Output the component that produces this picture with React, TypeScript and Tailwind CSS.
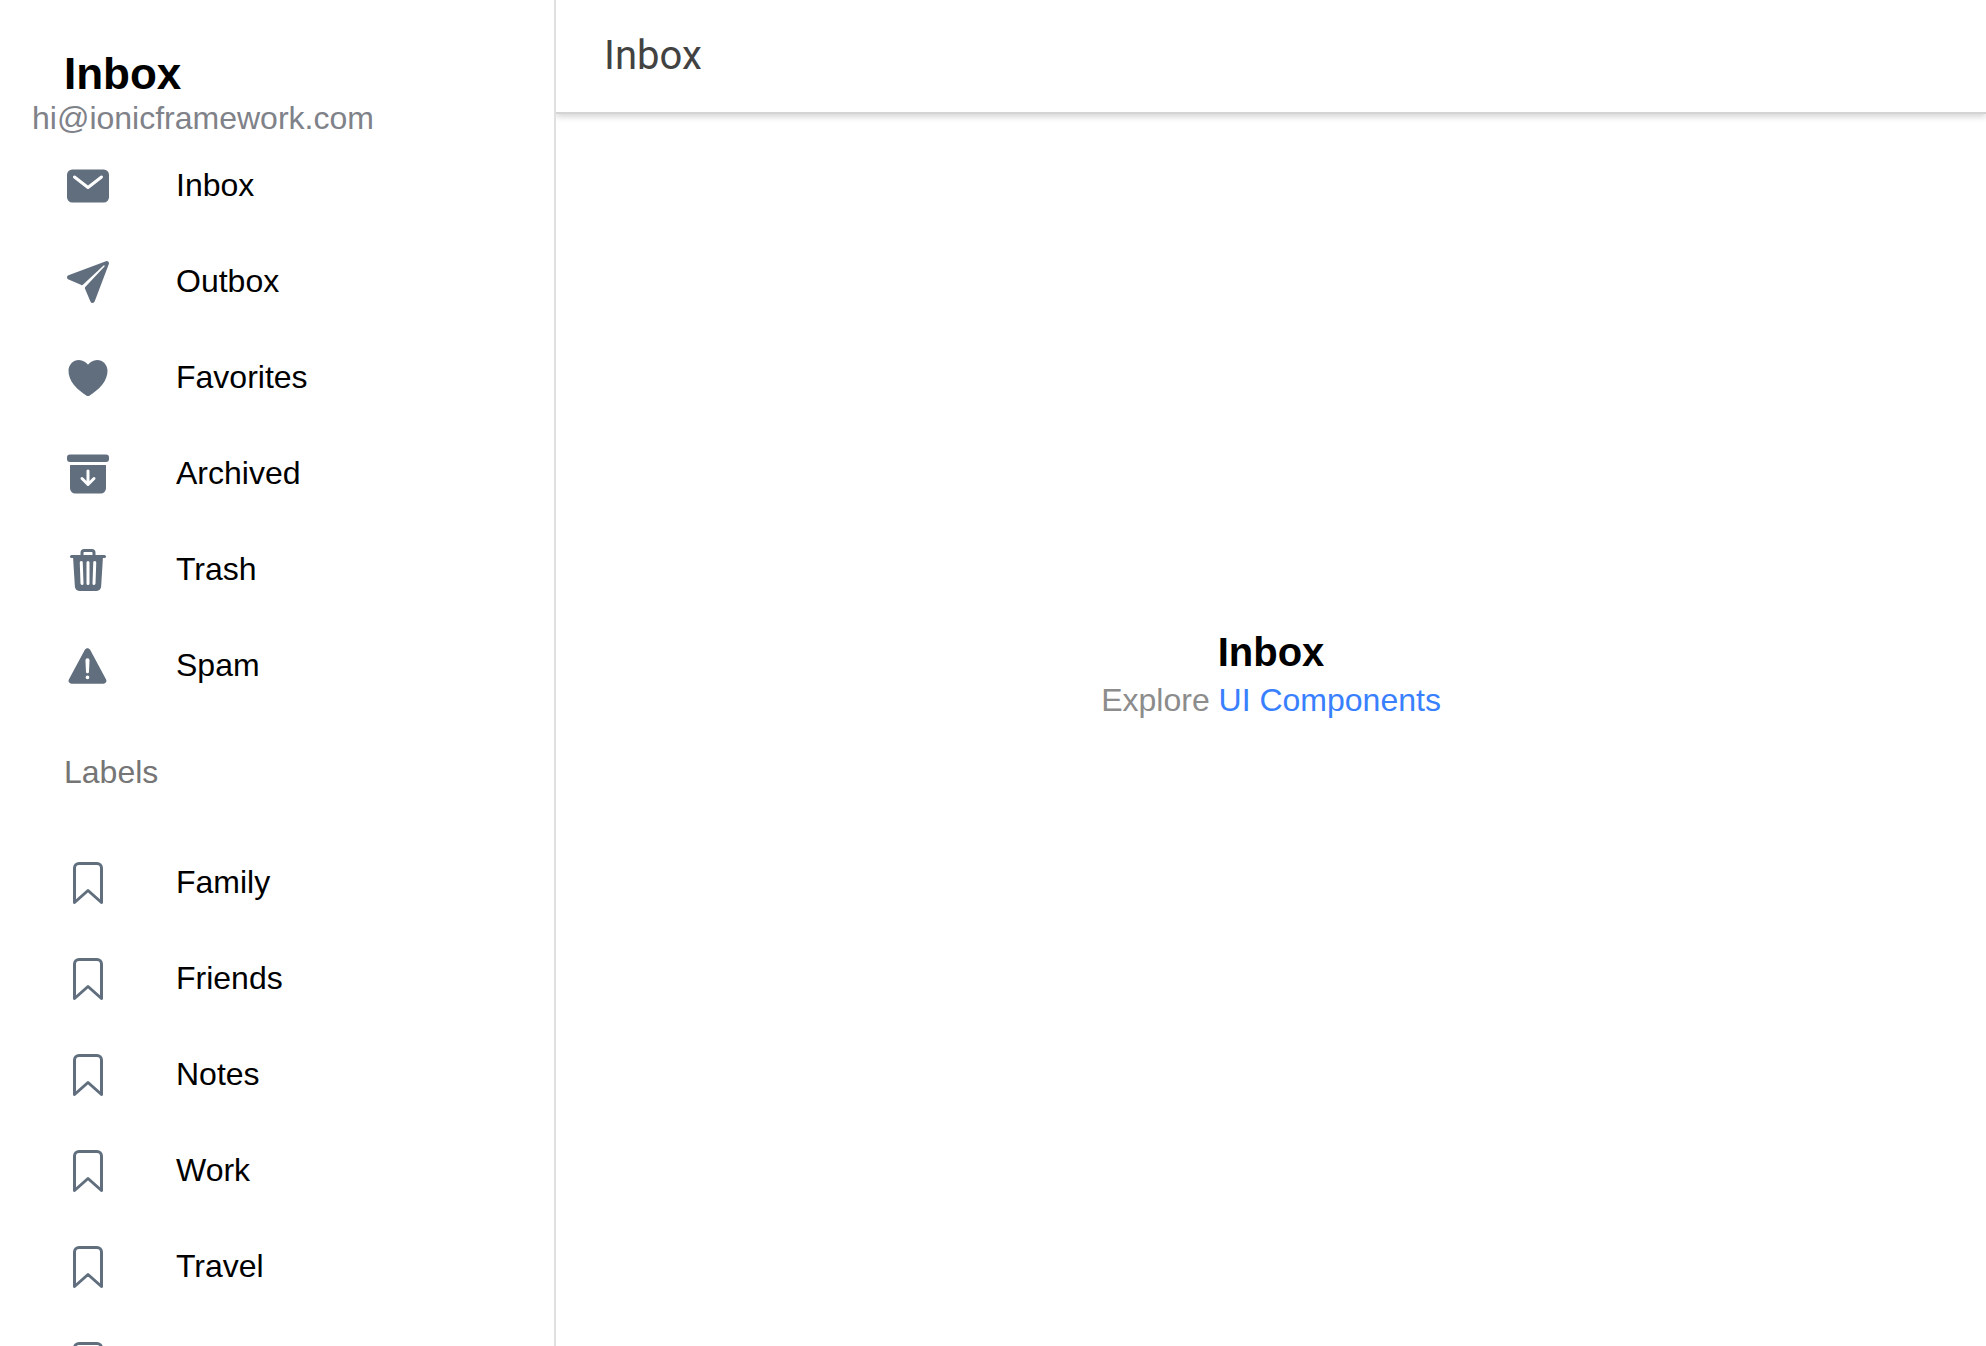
import {
  IoArchive,
  IoBookmarkOutline,
  IoHeart,
  IoMail,
  IoPaperPlane,
  IoTrash,
  IoWarning,
} from "react-icons/io5";
import type { IconType } from "react-icons";

const pages: { title: string; icon: IconType }[] = [
  { title: "Inbox", icon: IoMail },
  { title: "Outbox", icon: IoPaperPlane },
  { title: "Favorites", icon: IoHeart },
  { title: "Archived", icon: IoArchive },
  { title: "Trash", icon: IoTrash },
  { title: "Spam", icon: IoWarning },
];

const labels = ["Family", "Friends", "Notes", "Work", "Travel", "Reminders"];

function Item({ title, icon: Icon }: { title: string; icon: IconType }) {
  return (
    <li>
      <a href="#" className="flex h-24 items-center gap-16 px-16 text-black">
        <Icon className="size-12 shrink-0 text-[#616e7e]" aria-hidden="true" />
        <span className="pb-0.5 leading-8">{title}</span>
      </a>
    </li>
  );
}

export default function App() {
  return (
    <div className="flex h-screen overflow-hidden bg-white font-['Liberation_Sans',Arial,sans-serif] text-[32px]">
      <aside className="w-[28%] shrink-0 overflow-hidden border-r-2 border-[#e0e0e0] pt-12">
        <h1 className="px-16 text-[44px] leading-[52px] font-bold text-black">Inbox</h1>
        <p className="mb-0.5 px-8 leading-9 text-[#808289]">hi@ionicframework.com</p>
        <nav aria-label="Mailboxes">
          <ul>
            {pages.map((page) => (
              <Item key={page.title} title={page.title} icon={page.icon} />
            ))}
          </ul>
        </nav>
        <h2 className="mb-[5px] px-16 leading-[116px] text-[#757575]">Labels</h2>
        <nav aria-label="Labels">
          <ul>
            {labels.map((label) => (
              <Item key={label} title={label} icon={IoBookmarkOutline} />
            ))}
          </ul>
        </nav>
      </aside>
      <div className="grid min-w-0 flex-1 overflow-hidden">
        <header className="z-10 col-start-1 row-start-1 flex h-28 items-center self-start bg-white px-12 shadow-[0_2px_0_#d4d4d4,0_5px_6px_rgba(0,0,0,0.16)]">
          <div className="font-[Roboto,sans-serif] text-[40px] leading-12 text-[#424242]">Inbox</div>
        </header>
        <main className="col-start-1 row-start-1 self-center pt-0.5 text-center">
          <strong className="block text-[40px] leading-[52px] text-black">Inbox</strong>
          <p className="leading-11 text-[#8c8c8c]">
            Explore{" "}
            <a href="#" className="text-[#3880ff]">
              UI Components
            </a>
          </p>
        </main>
      </div>
    </div>
  );
}
